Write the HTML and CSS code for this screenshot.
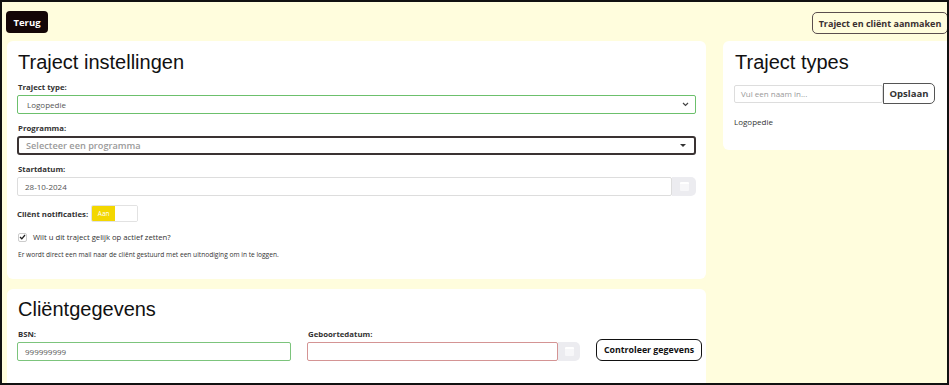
FILE: index.html
```html
<!DOCTYPE html>
<html lang="nl">
<head>
    <meta charset="UTF-8">
    <meta name="viewport" content="width=device-width, initial-scale=1.0">
    <title>Traject aanmaken</title>
    <link rel="stylesheet" href="styles.css">
</head>
<body>
    <div class="frame">
        <div class="topbar">
            <button class="btn-back">Terug</button>
            <button class="btn-create">Traject en cliënt aanmaken</button>
        </div>

        <div class="layout">
            <div class="main-col">
                <div class="card">
                    <h2 class="card-title">Traject instellingen</h2>

                    <label class="field-label">Traject type:</label>
                    <div class="select select-valid">
                        <span>Logopedie</span>
                        <svg class="chevron" width="7" height="5" viewBox="0 0 7 5"><path d="M1 1l2.5 2.5L6 1" fill="none" stroke="#444" stroke-width="1.2"/></svg>
                    </div>

                    <label class="field-label">Programma:</label>
                    <div class="select select-focus">
                        <span class="placeholder">Selecteer een programma</span>
                        <span class="caret"></span>
                    </div>

                    <label class="field-label">Startdatum:</label>
                    <div class="date-group">
                        <div class="input">28-10-2024</div>
                        <div class="date-btn"><span class="cal-icon"></span></div>
                    </div>

                    <div class="toggle-row">
                        <span class="field-label inline">Cliënt notificaties:</span>
                        <div class="toggle">
                            <span class="toggle-on">Aan</span>
                            <span class="toggle-off"></span>
                        </div>
                    </div>

                    <div class="check-row">
                        <span class="checkbox">
                            <svg width="7" height="6" viewBox="0 0 7 6"><path d="M1 3l1.8 1.8L6 1" fill="none" stroke="#222" stroke-width="1.3"/></svg>
                        </span>
                        <span>Wilt u dit traject gelijk op actief zetten?</span>
                    </div>

                    <p class="hint">Er wordt direct een mail naar de cliënt gestuurd met een uitnodiging om in te loggen.</p>
                </div>

                <div class="card card-client">
                    <h2 class="card-title">Cliëntgegevens</h2>
                    <div class="client-grid">
                        <div class="client-field">
                            <label class="field-label">BSN:</label>
                            <div class="input input-valid">999999999</div>
                        </div>
                        <div class="client-field">
                            <label class="field-label">Geboortedatum:</label>
                            <div class="date-group">
                                <div class="input input-invalid"></div>
                                <div class="date-btn small"><span class="cal-icon"></span></div>
                            </div>
                        </div>
                        <button class="btn-check">Controleer gegevens</button>
                    </div>
                </div>
            </div>

            <div class="side-col">
                <div class="card card-types">
                    <h2 class="card-title">Traject types</h2>
                    <div class="add-row">
                        <div class="input name-input">Vul een naam in...</div>
                        <button class="btn-save">Opslaan</button>
                    </div>
                    <div class="type-item">Logopedie</div>
                </div>
            </div>
        </div>
    </div>
</body>
</html>
```

FILE: styles.css
```css
* {
    box-sizing: border-box;
}

body {
    margin: 0;
    font-family: "Open Sans", sans-serif;
    color: #333;
}

.frame {
    width: 949px;
    height: 385px;
    border: 2px solid #111;
    background: #fffddd;
    overflow: hidden;
}

.topbar {
    display: flex;
    justify-content: space-between;
    align-items: flex-start;
    padding: 9px 0 0 3px;
    height: 39px;
}

.btn-back {
    background: #140606;
    color: #fff;
    border: none;
    border-radius: 4px;
    font-family: "Open Sans", sans-serif;
    font-weight: 700;
    font-size: 9.5px;
    width: 42px;
    height: 22px;
    padding: 0;
    margin-left: 1px;
}

.btn-create {
    background: #fffddd;
    color: #3a3030;
    border: 1.5px solid #5a4e4e;
    border-radius: 5px;
    font-family: "Open Sans", sans-serif;
    font-weight: 700;
    font-size: 9px;
    height: 22px;
    width: 136px;
    padding: 0;
    margin-top: 1px;
    margin-right: -1px;
}

.layout {
    display: flex;
    gap: 17px;
    padding-left: 5px;
}

.main-col {
    width: 700px;
    display: flex;
    flex-direction: column;
    gap: 10px;
}

.side-col {
    width: 240px;
    flex-shrink: 0;
}

.card {
    background: #fff;
    border-radius: 6px;
    padding: 8px 10px 20px 10px;
}

.card-title {
    font-family: "Liberation Sans", Arial, sans-serif;
    font-weight: 400;
    font-size: 20px;
    line-height: 26px;
    color: #111;
    margin: 0 0 0 1px;
}

.field-label {
    display: block;
    font-size: 7.8px;
    font-weight: 700;
    color: #333;
    line-height: 12px;
    margin: 6px 0 2px 1px;
}

.field-label.inline {
    display: inline;
    margin: 0;
}

.card > .field-label:not(:nth-of-type(1)) {
    margin-top: 8px;
}

.select {
    height: 19px;
    border: 1px solid #ccc;
    border-radius: 2px;
    display: flex;
    align-items: center;
    justify-content: space-between;
    padding: 0 6px 0 9px;
    font-size: 8px;
    color: #555;
}

.select-valid {
    border-color: #6cc06c;
}

.select-focus {
    border: 2px solid #3a3333;
    border-radius: 3px;
    padding-left: 7px;
}

.placeholder {
    font-size: 9.2px;
    font-weight: 600;
    color: #9a9a9a;
}

.caret {
    width: 0;
    height: 0;
    border-left: 3px solid transparent;
    border-right: 3px solid transparent;
    border-top: 3px solid #333;
    margin-right: 2px;
}

.date-group {
    display: flex;
    height: 19px;
}

.input {
    flex: 1;
    height: 19px;
    border: 1px solid #ddd;
    border-radius: 2px;
    display: flex;
    align-items: center;
    padding: 0 7px;
    font-size: 8px;
    color: #555;
}

.input-valid {
    border-color: #7cc47c;
}

.input-invalid {
    border-color: #d49494;
}

.date-btn {
    width: 24px;
    background: #ececf0;
    border-radius: 0 5px 5px 0;
    display: flex;
    align-items: center;
    justify-content: center;
}

.date-btn.small {
    width: 22px;
}

.cal-icon {
    width: 9px;
    height: 9px;
    background: #f7f7f9;
    border-top: 2px solid #fff;
    border-radius: 1px;
}

.toggle-row {
    display: flex;
    align-items: center;
    gap: 3px;
    margin-top: 9px;
}

.toggle {
    display: flex;
    width: 47px;
    height: 17px;
    border: 1px solid #e2e2e2;
    border-radius: 2px;
    overflow: hidden;
}

.toggle-on {
    width: 23px;
    background: #f3d700;
    color: #fff;
    font-size: 6.5px;
    display: flex;
    align-items: center;
    justify-content: center;
}

.toggle-off {
    flex: 1;
    background: #fff;
}

.check-row {
    display: flex;
    align-items: center;
    gap: 6px;
    margin-top: 10px;
    padding-left: 1px;
    font-size: 7.7px;
    color: #333;
}

.checkbox {
    width: 9px;
    height: 9px;
    border: 1px solid #ccc;
    border-radius: 2px;
    display: flex;
    align-items: center;
    justify-content: center;
}

.hint {
    font-size: 6.6px;
    color: #333;
    margin: 8px 0 0 1px;
}

.card-client {
    padding-top: 7px;
    height: 100px;
}

.client-grid {
    display: grid;
    grid-template-columns: 274px 273px auto;
    column-gap: 16px;
    align-items: end;
}

.client-grid .field-label {
    margin-top: 6px;
}

.btn-check {
    justify-self: end;
    margin-right: -6px;
    height: 22px;
    width: 106px;
    padding: 0;
    background: #fff;
    border: 1.5px solid #111;
    border-radius: 6px;
    font-family: "Open Sans", sans-serif;
    font-weight: 700;
    font-size: 8.8px;
    color: #111;
}

.card-types {
    height: 109px;
    padding-left: 11px;
}

.add-row {
    display: flex;
    align-items: center;
    margin-top: 8px;
}

.name-input {
    flex: none;
    width: 149px;
    height: 18px;
    color: #999;
    padding-left: 6px;
}

.btn-save {
    width: 52px;
    height: 21px;
    padding: 0;
    background: #fff;
    border: 1.5px solid #555;
    border-radius: 0 5px 5px 0;
    font-family: "Open Sans", sans-serif;
    font-weight: 700;
    font-size: 9.5px;
    color: #333;
}

.type-item {
    font-size: 8px;
    color: #333;
    margin-top: 12px;
}
```
